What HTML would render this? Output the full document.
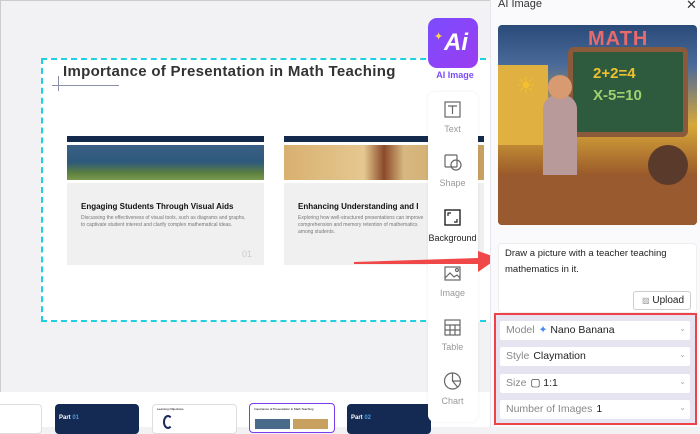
<!DOCTYPE html>
<html><head><style>
*{box-sizing:border-box;margin:0;padding:0}
body{width:700px;height:427px;overflow:hidden;background:#f2f2f4;font-family:"Liberation Sans",sans-serif;position:relative}
.a{position:absolute}
.tb{color:#999;font-size:9px;text-align:center;width:49px}
.opt{position:absolute;left:500px;width:190px;height:19px;background:#fff;font-size:10.5px;color:#222;padding:3px 6px;border-radius:2px}
.opt span.l{color:#888;margin-right:4px}
.opt .c{position:absolute;right:4px;top:3px;color:#aaa;font-size:8px}
</style></head><body>
<div class="a" style="left:0;top:0;width:700px;height:1px;background:#ccc"></div>
<div class="a" style="left:0;top:0;width:1px;height:427px;background:#ccc"></div>
<!-- slide -->
<div class="a" style="left:41px;top:58px;width:455px;height:264px;background:#fff;border:2px dashed #1ed0e0;border-right:none"></div>
<div class="a" style="left:63px;top:63px;font-size:15px;font-weight:bold;color:#333;letter-spacing:.3px">Importance of Presentation in Math Teaching</div>
<div class="a" style="left:52px;top:85px;width:67px;height:1px;background:#8891a8"></div>
<div class="a" style="left:58px;top:76px;width:1px;height:15px;background:#8891a8"></div>
<!-- card1 -->
<div class="a" style="left:67px;top:136px;width:197px;height:6px;background:#142a4c"></div>
<div class="a" style="left:67px;top:145px;width:197px;height:35px;background:linear-gradient(180deg,#3a5f86,#2e5a7a 50%,#5d8040 80%,#7a9a50)"></div>
<div class="a" style="left:67px;top:183px;width:197px;height:82px;background:#f0f0f0"></div>
<div class="a" style="left:81px;top:202px;font-size:8px;font-weight:bold;color:#111">Engaging Students Through Visual Aids</div>
<div class="a" style="left:81px;top:215px;width:165px;font-size:5px;line-height:7px;color:#777">Discussing the effectiveness of visual tools, such as diagrams and graphs, to captivate student interest and clarify complex mathematical ideas.</div>
<div class="a" style="left:242px;top:249px;font-size:9px;color:#ccc">01</div>
<!-- card2 -->
<div class="a" style="left:284px;top:136px;width:200px;height:6px;background:#142a4c"></div>
<div class="a" style="left:284px;top:145px;width:200px;height:35px;background:linear-gradient(90deg,#d8b070,#e5c890 40%,#8a4a2a 50%,#d8b880 60%,#c8a060)"></div>
<div class="a" style="left:284px;top:183px;width:200px;height:82px;background:#f0f0f0"></div>
<div class="a" style="left:298px;top:202px;font-size:8px;font-weight:bold;color:#111;white-space:nowrap">Enhancing Understanding and I</div>
<div class="a" style="left:298px;top:215px;width:130px;font-size:5px;line-height:7px;color:#777">Exploring how well-structured presentations can improve comprehension and memory retention of mathematics among students.</div>
<!-- bottom strip -->
<div class="a" style="left:0;top:392px;width:490px;height:35px;background:#fff"></div>
<div class="a" style="left:-5px;top:404px;width:47px;height:30px;border:1px solid #ddd;border-radius:4px;background:#fff"></div>
<div class="a" style="left:55px;top:404px;width:84px;height:30px;border-radius:4px;background:#142a52;color:#fff;font-size:6px;font-weight:bold;padding:11px 4px">Part <span style="color:#4a9ae0">01</span></div>
<div class="a" style="left:152px;top:404px;width:85px;height:30px;border:1px solid #ddd;border-radius:4px;background:#fff"><div style="font-size:3px;padding:2px 4px">Learning Objectives</div><div style="position:absolute;left:10px;top:10px;width:10px;height:14px;border:2px solid #1a2a5a;border-radius:50%;border-right-color:transparent"></div></div>
<div class="a" style="left:249px;top:403px;width:86px;height:30px;border:1.5px solid #7a3cf0;border-radius:4px;background:#fff"><div style="font-size:3px;padding:3px 4px">Importance of Presentation in Math Teaching</div><div style="position:absolute;left:5px;top:15px;width:35px;height:10px;background:#4a6a8a"></div><div style="position:absolute;left:43px;top:15px;width:35px;height:10px;background:#c8a060"></div></div>
<div class="a" style="left:347px;top:404px;width:84px;height:30px;border-radius:4px;background:#142a52;color:#fff;font-size:6px;font-weight:bold;padding:11px 4px">Part <span style="color:#4a9ae0">02</span></div>
<!-- AI button -->
<div class="a" style="left:428px;top:18px;width:50px;height:50px;border-radius:9px;background:linear-gradient(135deg,#7b4cff,#9b3cf0);color:#fff;font-size:24px;font-weight:bold;font-style:italic;text-align:center;line-height:50px;padding-left:6px">Ai</div>
<div class="a" style="left:434px;top:30px;color:#ffd84a;font-size:11px">✦</div>
<div class="a" style="left:430px;top:70px;width:50px;text-align:center;font-size:9px;font-weight:bold;color:#7b4cff">AI Image</div>
<!-- toolbar -->
<div class="a" style="left:428px;top:92px;width:50px;height:330px;background:#fff;border-radius:7px;box-shadow:0 0 3px rgba(0,0,0,.08)"></div>
<svg class="a" style="left:428px;top:92px" width="50" height="330" fill="none" stroke="#666" stroke-width="1.2">
<rect x="17" y="10" width="15" height="15"/><path d="M20 14h9M24.5 14v8"/>
<rect x="17" y="63" width="12" height="12" rx="1"/><circle cx="28" cy="73" r="5"/>
<rect x="17" y="118" width="15" height="15" stroke="#222" stroke-width="1.4"/><path d="M20 124v-3h3M29 127v3h-3" stroke="#222"/>
<rect x="17" y="175" width="15" height="13"/><path d="M17 186l5-5 4 4 3-2 3 3"/><circle cx="29" cy="178" r="1.5"/>
<rect x="17" y="228" width="15" height="15"/><path d="M17 233h15M17 238h15M22 233v10M27 233v10"/>
<circle cx="24.5" cy="289" r="8"/><path d="M24.5 281v8h8M24.5 289l5 6"/>
</svg>
<div class="a tb" style="left:428px;top:124px">Text</div>
<div class="a tb" style="left:428px;top:178px">Shape</div>
<div class="a tb" style="left:428px;top:233px;color:#222">Background</div>
<div class="a tb" style="left:428px;top:288px">Image</div>
<div class="a tb" style="left:428px;top:342px">Table</div>
<div class="a tb" style="left:428px;top:396px">Chart</div>
<!-- arrow -->
<svg class="a" style="left:350px;top:248px" width="150" height="30"><path d="M4 14 L128 10 L128 3 L148 10 L128 24 L128 16 L4 16Z" fill="#f04848"/></svg>
<!-- right panel -->
<div class="a" style="left:490px;top:0;width:210px;height:427px;background:#fafafc;border-left:1px solid #e6e6ee"></div>
<div class="a" style="left:498px;top:-2px;font-size:11px;color:#333">AI Image</div>
<div class="a" style="left:686px;top:-3px;font-size:13px;color:#333">✕</div>
<div class="a" style="left:498px;top:25px;width:199px;height:200px;border-radius:4px;overflow:hidden;background:linear-gradient(180deg,#2a4a7a 0,#4a6a9a 20%,#d8a83a 50%,#9a5a2a 75%,#6a3a20)">
<div style="position:absolute;left:0;top:40px;width:50px;height:80px;background:#e0b040"></div>
<div style="position:absolute;left:70px;top:22px;width:120px;height:90px;background:#2e5a3e;border:5px solid #8a5a3a;border-radius:6px"></div>
<div style="position:absolute;left:90px;top:3px;font:bold 20px 'Liberation Sans';color:#e86a6a;letter-spacing:1px">MATH</div>
<div style="position:absolute;left:95px;top:40px;font:bold 15px 'Liberation Sans';color:#f0c030">2+2=4</div>
<div style="position:absolute;left:95px;top:62px;font:bold 15px 'Liberation Sans';color:#a0d070">X-5=10</div>
<div style="position:absolute;left:18px;top:48px;font-size:22px;color:#f5c030">☀</div>
<div style="position:absolute;left:45px;top:70px;width:34px;height:90px;background:#b89a9a;border-radius:14px 14px 4px 4px"></div>
<div style="position:absolute;left:50px;top:50px;width:24px;height:24px;background:#d89a70;border-radius:50%"></div>
<div style="position:absolute;left:0;top:150px;width:199px;height:50px;background:#9a5a30"></div>
<div style="position:absolute;left:150px;top:120px;width:40px;height:40px;background:#5a3a2a;border-radius:50%"></div>
</div>
<div class="a" style="left:498px;top:243px;width:199px;height:70px;background:#fff;border-radius:4px;border:1px solid #eee;font-size:9.5px;line-height:16px;color:#222;padding:2px 6px">Draw a picture with a teacher teaching mathematics in it.</div>
<div class="a" style="left:633px;top:291px;width:58px;height:19px;border:1px solid #ccc;border-radius:3px;background:#fff;font-size:10px;color:#222;padding:3px 0 0 8px"><span style="color:#999;font-size:8px">▨</span> Upload</div>
<div class="a" style="left:494px;top:313px;width:203px;height:112px;border:2px solid #f04048;background:#e6e4f0"></div>
<div class="opt" style="top:321px"><span class="l">Model</span><span style="color:#4a8af0">✦</span> Nano Banana<span class="c">⌄</span></div>
<div class="opt" style="top:347px"><span class="l">Style</span>Claymation<span class="c">⌄</span></div>
<div class="opt" style="top:374px"><span class="l">Size</span>▢ 1:1<span class="c">⌄</span></div>
<div class="opt" style="top:400px"><span class="l">Number of Images</span>1<span class="c">⌄</span></div>
</body></html>
